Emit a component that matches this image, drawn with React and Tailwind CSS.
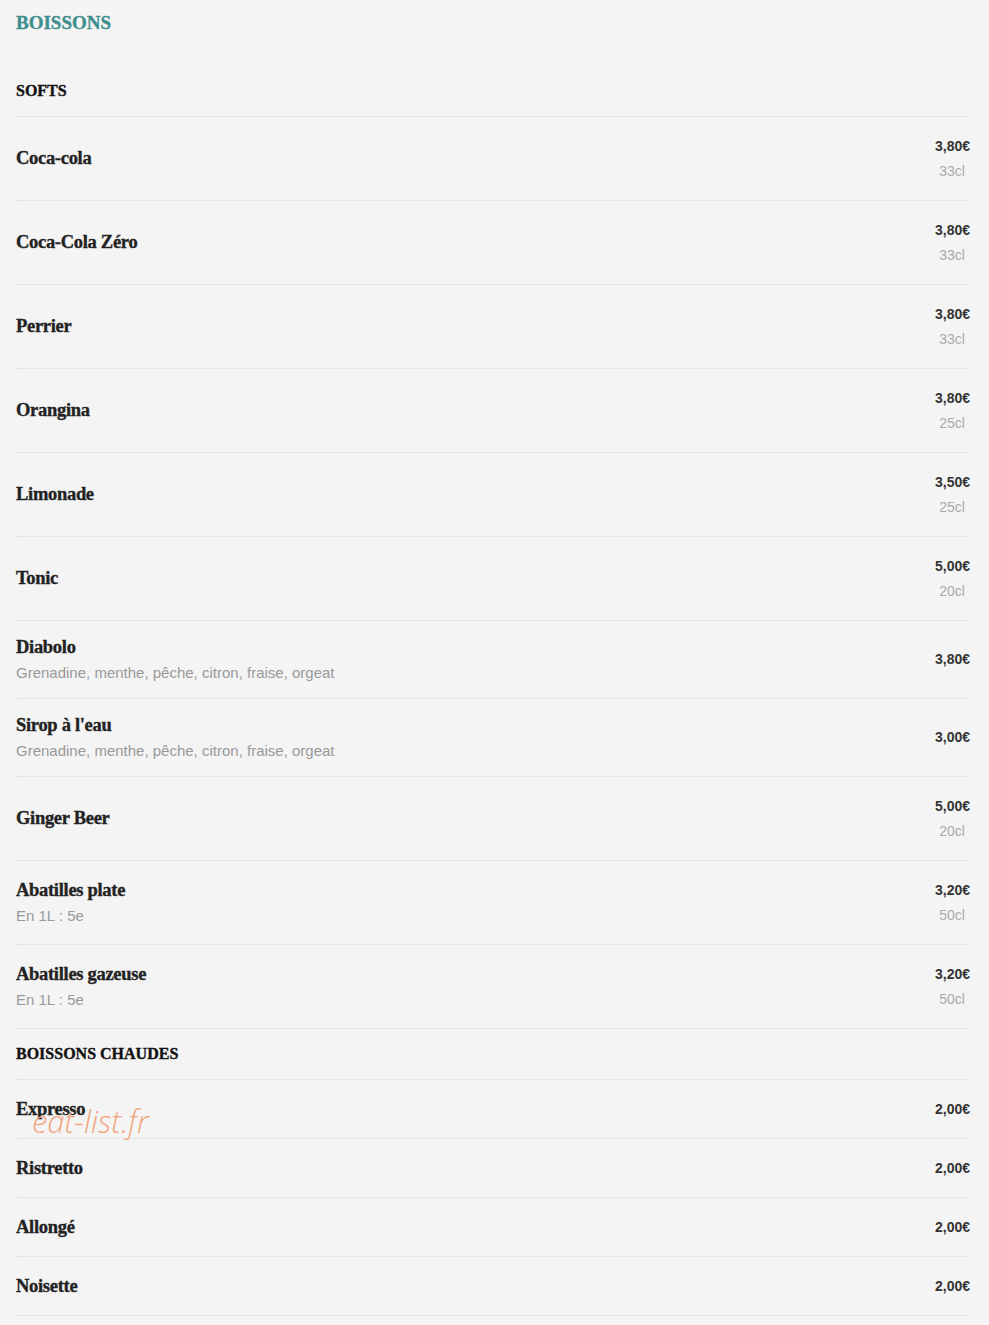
const softs = [
  { name: "Coca-cola", price: "3,80€", size: "33cl" },
  { name: "Coca-Cola Zéro", price: "3,80€", size: "33cl" },
  { name: "Perrier", price: "3,80€", size: "33cl" },
  { name: "Orangina", price: "3,80€", size: "25cl" },
  { name: "Limonade", price: "3,50€", size: "25cl" },
  { name: "Tonic", price: "5,00€", size: "20cl" },
  { name: "Diabolo", desc: "Grenadine, menthe, pêche, citron, fraise, orgeat", price: "3,80€" },
  { name: "Sirop à l'eau", desc: "Grenadine, menthe, pêche, citron, fraise, orgeat", price: "3,00€" },
  { name: "Ginger Beer", price: "5,00€", size: "20cl" },
  { name: "Abatilles plate", desc: "En 1L : 5e", price: "3,20€", size: "50cl" },
  { name: "Abatilles gazeuse", desc: "En 1L : 5e", price: "3,20€", size: "50cl" },
];

const chaudes = [
  { name: "Expresso", price: "2,00€" },
  { name: "Ristretto", price: "2,00€" },
  { name: "Allongé", price: "2,00€" },
  { name: "Noisette", price: "2,00€" },
];

const serif = "font-['Liberation_Serif',serif] [-webkit-text-stroke:0.35px_currentColor]";
const sans = "font-['Liberation_Sans',Arial,sans-serif]";

function Row({ item, hot }) {
  const h = hot ? "h-[59px]" : item.desc && !item.size ? "h-[78px]" : "h-[84px]";
  return (
    <div className={`flex items-center justify-between border-b border-dotted border-[#d9d9d9] ${h}`}>
      <div className="flex flex-col">
        <div className={`${serif} text-[18.5px] font-bold leading-[25px] tracking-[-0.3px] text-[#222]`}>{item.name}</div>
        {item.desc && <div className={`${sans} text-[15px] leading-[25px] text-[#999]`}>{item.desc}</div>}
      </div>
      <div className={`${sans} flex flex-col items-center text-[14px] leading-[25px]`}>
        <div className="font-bold text-[#333]">{item.price}</div>
        {item.size && <div className="pr-[1px] text-[#aaa]">{item.size}</div>}
      </div>
    </div>
  );
}

function Header({ title }) {
  return (
    <div className={`${serif} flex h-[51px] items-center border-b border-dotted border-[#d9d9d9] text-[16px] font-bold text-[#111]`}>
      {title}
    </div>
  );
}

export default function App() {
  return (
    <div className="relative min-h-[1325px] w-full bg-[#f4f4f4] pl-4 pr-[19px]">
      <div className={`${serif} flex h-[46px] items-center text-[19px] font-bold text-[#3f8f8c]`}>BOISSONS</div>
      <div className="h-[20px]" />
      <Header title="SOFTS" />
      {softs.map((it) => (
        <Row key={it.name} item={it} />
      ))}
      <Header title="BOISSONS CHAUDES" />
      {chaudes.map((it) => (
        <Row key={it.name} item={it} hot />
      ))}
      <div className="pointer-events-none absolute left-[32px] top-[1098px] font-['Open_Sans',sans-serif] text-[31px] font-light italic text-[#f3a57f]">
        eat-list.fr
      </div>
    </div>
  );
}
